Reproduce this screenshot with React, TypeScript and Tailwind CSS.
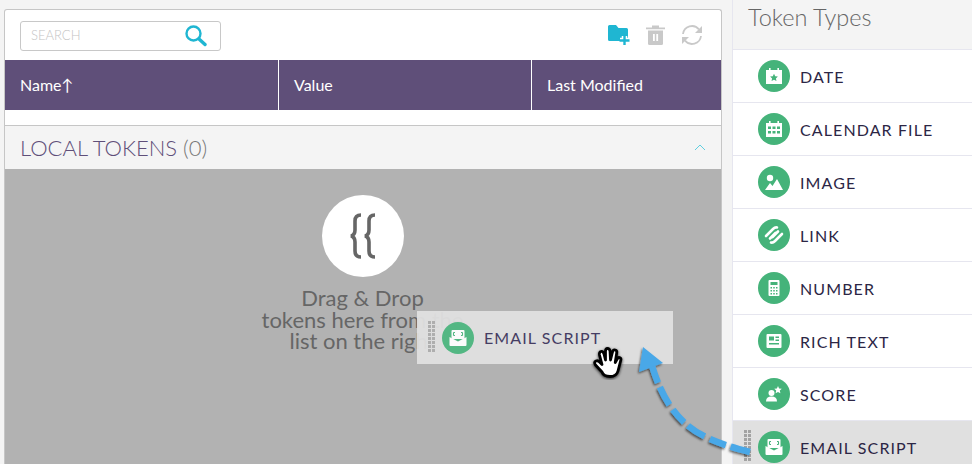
import React from "react";

const G = "#45b37a";

const icons: Record<string, React.ReactNode> = {
  date: (
    <>
      <path d="M-8-6h3v-2h1.600v2h6.800v-2H5v2h3v14H-8z" fill="#fff" />
      <path d="M0-2.200l1.200 2.500 2.700.3-2 1.800.6 2.700L0 3.800-2.500 5.100l.6-2.700-2-1.800 2.700-.3z" fill={G} />
    </>
  ),
  calendar: (
    <>
      <path d="M-8-6h3v-2h1.600v2h6.800v-2H5v2h3v14H-8z" fill="#fff" />
      <path d="M-6-2.500h3V0h-3zM-1.500-2.500h3V0h-3zM3-2.500h3V0H3zM-6 2h3v2.500h-3zM-1.500 2h3v2.500h-3zM3 2h3v2.500H3z" fill={G} />
    </>
  ),
  image: (
    <>
      <circle cx="-4" cy="-4" r="3.200" fill="#fff" />
      <path d="M-9 8l5-7 2.500 3L3-3l6 11z" fill="#fff" />
    </>
  ),
  link: (
    <g stroke="#fff" strokeWidth="2.600" strokeLinecap="round" fill="none">
      <path d="M-8 1L-1-6Q1-8 3-7.500" />
      <path d="M-4 3.500L1.500-2" />
      <path d="M-1.500 2L4-3.500" />
      <path d="M-3 7.500Q-1 8 1 6L8-1" />
    </g>
  ),
  number: (
    <>
      <rect x="-5.500" y="-8" width="11" height="16" rx="1" fill="#fff" />
      <path d="M-3.500-6h7v3h-7zM-3.500-1h1.500v1.500h-1.500zM-.75-1h1.500v1.500h-1.500zM2-1h1.500v1.500H2zM-3.500 2h1.500v1.500h-1.500zM-.75 2h1.500v1.500h-1.500zM2 2h1.500v1.500H2zM-3.500 5h1.500v1.500h-1.500zM-.75 5h1.500v1.500h-1.500zM2 5h1.500v1.500H2z" fill={G} />
    </>
  ),
  rich: (
    <>
      <rect x="-7.500" y="-7" width="15" height="14" rx="1" fill="#fff" />
      <path d="M-5-4.500h5v4h-5zM1.500-4.500H5V-3H1.500zM1.500-1.500H5V0H1.500zM-5 2H5v1.500H-5z" fill={G} />
    </>
  ),
  score: (
    <>
      <circle cx="-2.500" cy="-1" r="3" fill="#fff" />
      <path d="M-8 7.500q0-5 5.500-5t5.500 5z" fill="#fff" />
      <path d="M4-8l1.100 2.500 2.700.3-2 1.800.6 2.700L4-2 1.600-.7l.6-2.700-2-1.800 2.700-.3z" fill="#fff" />
    </>
  ),
  email: (
    <>
      <rect x="-6.500" y="-8" width="13" height="9" rx="1" fill="#fff" />
      <path d="M-4.500-5.500h1.500M-4.500-5.500v3M-4.500-2.500h1.500M4.500-5.500H3M4.500-5.500v3M4.500-2.500H3" stroke={G} strokeWidth="1.100" fill="none" />
      <path d="M-8.500-1L0 3.500 8.500-1V7a1 1 0 0 1-1 1h-15a1 1 0 0 1-1-1z" fill="#fff" />
    </>
  ),
};

function TokenIcon({ name, faded }: { name: string; faded?: boolean }) {
  return (
    <svg width="32" height="32" viewBox="-16 -16 32 32" className={faded ? "shrink-0 opacity-90" : "shrink-0"}>
      <circle r="16" fill={G} />
      {icons[name]}
    </svg>
  );
}

function Grip() {
  return (
    <svg width="8" height="32" viewBox="0 0 8 32" className="shrink-0">
      {[0, 1, 2, 3, 4, 5, 6, 7].map((i) => (
        <g key={i} fill="#a3a3a3">
          <rect x="0" y={i * 4} width="3" height="3" />
          <rect x="4" y={i * 4} width="3" height="3" />
        </g>
      ))}
    </svg>
  );
}

const rows: [string, string][] = [
  ["date", "DATE"],
  ["calendar", "CALENDAR FILE"],
  ["image", "IMAGE"],
  ["link", "LINK"],
  ["number", "NUMBER"],
  ["rich", "RICH TEXT"],
  ["score", "SCORE"],
];

export default function App() {
  return (
    <div
      className="relative flex h-[464px] w-[972px] overflow-hidden bg-[#f4f4f4]"
      style={{ fontFamily: "Lato, 'Open Sans', sans-serif" }}
    >
      {/* Left panel */}
      <div className="ml-[4px] mt-[9px] flex w-[718px] flex-col rounded-t-[3px] border-x border-t border-[#c6c6c6] bg-white">
        <div className="flex h-[50px] shrink-0 items-center justify-between pl-[15px] pr-[18px]">
          <div className="mt-[1px] flex h-[30px] w-[201px] items-center justify-between rounded-[3px] border border-[#c8c8c8] pl-[10px] pr-[13px]">
            <span className="text-[13px] font-light text-[#c4c4c4]">SEARCH</span>
            <svg width="22" height="22" viewBox="0 0 22 22">
              <circle cx="8.500" cy="8.500" r="7" fill="none" stroke="#1fb6d2" strokeWidth="2.400" />
              <path d="M14 14l6 5.500" stroke="#1fb6d2" strokeWidth="3.400" strokeLinecap="round" />
            </svg>
          </div>
          <div className="flex items-center gap-[16px]">
            <svg width="22" height="20" viewBox="0 0 22 20">
              <path d="M0 1.500A1.500 1.500 0 0 1 1.500 0H8l2.500 3h8A1.500 1.500 0 0 1 20 4.500V16H1.500A1.500 1.500 0 0 1 0 14.500z" fill="#1fb6d2" />
              <path d="M16.500 11v9M12 15.500h9" stroke="#fff" strokeWidth="5.500" />
              <path d="M16.500 10.500v9.500M11.500 15.500h10" stroke="#1fb6d2" strokeWidth="2.400" />
            </svg>
            <svg width="19" height="20" viewBox="0 0 19 20">
              <path d="M0 2.500h6V0.500h7v2h6v1.700H0z" fill="#c9c9c9" />
              <path d="M2 5.500h15V18.500a1.500 1.500 0 0 1-1.500 1.500h-12A1.500 1.500 0 0 1 2 18.500z" fill="#c9c9c9" />
              <path d="M7 9h1.800v7H7zM10.300 9h1.800v7h-1.800z" fill="#fff" />
            </svg>
            <svg width="22" height="20" viewBox="0 0 22 20" fill="none" stroke="#c9c9c9" strokeWidth="1.800">
              <path d="M2 9A9 9 0 0 1 18 4.500" />
              <path d="M20 11A9 9 0 0 1 4 15.500" />
              <path d="M21 1v7h-7z" fill="#c9c9c9" stroke="none" />
              <path d="M1 19v-7h7z" fill="#c9c9c9" stroke="none" />
            </svg>
          </div>
        </div>
        <div className="flex h-[50px] shrink-0 bg-[#5f4f79] text-[16px] text-white">
          <div className="flex w-[274px] items-center border-r border-white pl-[15px]">Name↑</div>
          <div className="flex w-[253px] items-center border-r border-white pl-[15px]">Value</div>
          <div className="flex flex-1 items-center pl-[15px]">Last Modified</div>
        </div>
        <div className="h-[16px] shrink-0 border-b border-[#c6c6c6]" />
        <div className="flex h-[43px] shrink-0 items-center justify-between bg-[#f4f4f4] px-[15px]">
          <span className="text-[22px] font-light text-[#5f4f79]">
            LOCAL TOKENS <span className="text-[#777]">(0)</span>
          </span>
          <svg width="12" height="7" viewBox="0 0 12 7" fill="none" stroke="#5fcfe0" strokeWidth="1">
            <path d="M1 6l5-5 5 5" />
          </svg>
        </div>
        <div className="flex flex-1 flex-col items-center bg-[#b2b2b2] pr-[1px] pt-[26px]">
          <div className="flex h-[82px] w-[82px] items-center justify-center rounded-full bg-white">
            <svg width="28" height="48" viewBox="0 0 28 48" fill="none" stroke="#666" strokeWidth="3.600">
              <path d="M12 3Q6 3 6 9V18Q6 23 2 24Q6 25 6 30V39Q6 45 12 45" />
              <path d="M26 3Q20 3 20 9V18Q20 23 16 24Q20 25 20 30V39Q20 45 26 45" />
            </svg>
          </div>
          <div className="mt-[10px] text-center text-[22px] font-normal leading-[21.500px] text-[#666]">
            Drag &amp; Drop
            <br />
            tokens here from the
            <br />
            list on the right
          </div>
        </div>
      </div>

      {/* Right panel */}
      <div className="ml-[10px] flex flex-1 flex-col border-l border-[#e6e6ef]">
        <div className="flex h-[49px] shrink-0 items-start pl-[15px] text-[23.500px] font-light leading-[34px] text-[#666]">Token Types</div>
        {rows.map(([k, label]) => (
          <div key={k} className="flex h-[53px] shrink-0 items-center gap-[10px] border-t border-[#e6e6ef] bg-white pl-[25px]">
            <TokenIcon name={k} />
            <span className="pt-[2px] text-[16px] tracking-[1.100px] text-[#2c2645]">{label}</span>
          </div>
        ))}
        <div className="relative flex h-[53px] shrink-0 items-center gap-[10px] border-t border-[#e6e6ef] bg-[#e0e0e0] pl-[25px]">
          <div className="absolute left-[11px] top-[9px]">
            <Grip />
          </div>
          <TokenIcon name="email" />
          <span className="pt-[2px] text-[16px] tracking-[1.100px] text-[#2c2645]">EMAIL SCRIPT</span>
        </div>
      </div>

      {/* Dragged item */}
      <div className="absolute left-[417px] top-[311px] flex h-[53px] w-[256px] items-center gap-[10px] bg-[#e0e0e0]/95 pl-[25px]">
        <div className="absolute left-[11px] top-[10px] opacity-80">
          <Grip />
        </div>
        <TokenIcon name="email" faded />
        <span className="text-[16px] tracking-[1.100px] text-[#453d63]">EMAIL SCRIPT</span>
      </div>

      {/* Arrow */}
      <svg className="absolute left-[630px] top-[340px]" width="130" height="124" viewBox="0 0 130 124">
        <defs>
          <filter id="s" x="-20%" y="-20%" width="140%" height="140%">
            <feDropShadow dx="-1" dy="1.500" stdDeviation="1.200" floodColor="#000" floodOpacity="0.600" />
          </filter>
        </defs>
        <g filter="url(#s)">
          <path d="M120 112C75 100 42 90 22 26" fill="none" stroke="#4aa8e8" strokeWidth="6.500" strokeDasharray="20 5 17 6" />
          <path d="M9 32L13 7 33 23z" fill="#4aa8e8" />
        </g>
      </svg>

      {/* Hand cursor */}
      <svg className="absolute left-[591px] top-[346px]" width="34" height="34" viewBox="0 0 34 34">
        <defs>
          <filter id="h" x="-30%" y="-30%" width="160%" height="160%">
            <feDropShadow dx="0" dy="1" stdDeviation="1.400" floodColor="#000" floodOpacity="0.800" />
          </filter>
        </defs>
        <path
          filter="url(#h)"
          d="M11 26L4.500 19q-2-3 .5-4t4.500 2L11 18.500 8.500 9q-.5-3 1.500-3.500t3 2.500l1.500 6L14.500 5q0-2.500 2-2.500t2.500 2.500l.5 9 2-8q.7-2.500 2.700-2t1.500 3l-1.500 9.500 2-3.500q1.200-2 2.700-1.200t.8 2.700L27 25q-1.500 5.500-8 5.500t-8-4.500z"
          fill="#fff"
          stroke="#000"
          strokeWidth="2.800"
          strokeLinejoin="round"
        />
      </svg>
    </div>
  );
}
